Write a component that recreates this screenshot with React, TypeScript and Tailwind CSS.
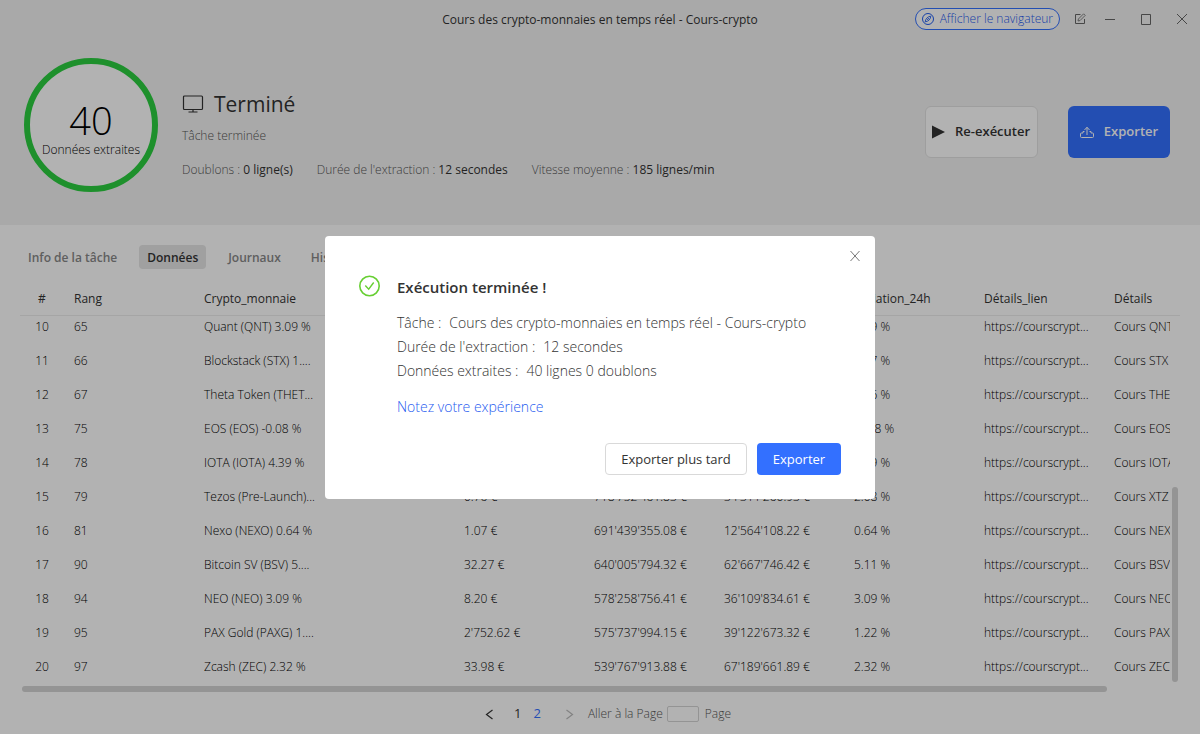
import { ReactNode, useState } from "react";
import clsx from "clsx";

const TITLE = "Cours des crypto-monnaies en temps réel - Cours-crypto";
const TABS = ["Info de la tâche", "Données", "Journaux", "Historique"];
const COLUMNS = [
  "Rang",
  "Crypto_monnaie",
  "",
  "Prix",
  "Capitalisation",
  "Volume_24h",
  "Variation_24h",
  "Détails_lien",
  "Détails",
];
const LINK = "https://courscrypt...";

interface Row {
  id: number;
  rank: string;
  name: string;
  price?: string;
  cap?: string;
  volume?: string;
  change: string;
  details: string;
}

const ROWS: Row[] = [
  { id: 10, rank: "65", name: "Quant (QNT) 3.09 %", change: "3.09 %", details: "Cours QNT" },
  { id: 11, rank: "66", name: "Blockstack (STX) 1....", change: "1.67 %", details: "Cours STX" },
  { id: 12, rank: "67", name: "Theta Token (THET...", change: "1.96 %", details: "Cours THETA" },
  { id: 13, rank: "75", name: "EOS (EOS) -0.08 %", change: "-0.08 %", details: "Cours EOS" },
  { id: 14, rank: "78", name: "IOTA (IOTA) 4.39 %", change: "4.39 %", details: "Cours IOTA" },
  {
    id: 15,
    rank: "79",
    name: "Tezos (Pre-Launch)...",
    price: "0.76 €",
    cap: "718'752'461.83 €",
    volume: "34'311'260.93 €",
    change: "2.08 %",
    details: "Cours XTZ",
  },
  {
    id: 16,
    rank: "81",
    name: "Nexo (NEXO) 0.64 %",
    price: "1.07 €",
    cap: "691'439'355.08 €",
    volume: "12'564'108.22 €",
    change: "0.64 %",
    details: "Cours NEXO",
  },
  {
    id: 17,
    rank: "90",
    name: "Bitcoin SV (BSV) 5....",
    price: "32.27 €",
    cap: "640'005'794.32 €",
    volume: "62'667'746.42 €",
    change: "5.11 %",
    details: "Cours BSV",
  },
  {
    id: 18,
    rank: "94",
    name: "NEO (NEO) 3.09 %",
    price: "8.20 €",
    cap: "578'258'756.41 €",
    volume: "36'109'834.61 €",
    change: "3.09 %",
    details: "Cours NEO",
  },
  {
    id: 19,
    rank: "95",
    name: "PAX Gold (PAXG) 1....",
    price: "2'752.62 €",
    cap: "575'737'994.15 €",
    volume: "39'122'673.32 €",
    change: "1.22 %",
    details: "Cours PAXG",
  },
  {
    id: 20,
    rank: "97",
    name: "Zcash (ZEC) 2.32 %",
    price: "33.98 €",
    cap: "539'767'913.88 €",
    volume: "67'189'661.89 €",
    change: "2.32 %",
    details: "Cours ZEC",
  },
];

export default function App() {
  const [open, setOpen] = useState(true);

  return (
    <div className="flex h-screen min-h-[600px] flex-col overflow-hidden bg-white font-['Open_Sans',sans-serif] text-xs font-light text-black">
      <header className="bg-[#f3f3f3]">
        <TitleBar />
        <Summary />
      </header>
      <main className="flex min-h-0 flex-auto flex-col px-5 pt-5">
        <Tabs />
        <DataTable />
        <Pagination />
      </main>
      {open ? <FinishedDialog onClose={() => setOpen(false)} /> : null}
    </div>
  );
}

function TitleBar() {
  return (
    <div className="grid h-[38px] grid-cols-[1fr_auto_1fr] items-center">
      <div />
      <h1 className="pt-0.5 font-medium text-[#333]">{TITLE}</h1>
      <div className="flex items-center justify-end pr-3">
        <button className="mr-3.5 flex h-[22px] items-center gap-1.5 whitespace-nowrap rounded-full border border-[#3370ff] bg-white px-1.5 text-[#1f5cf0]">
          <CompassIcon />
          Afficher le navigateur
        </button>
        <div className="flex items-center text-[#666]">
          <button aria-label="Modifier" className="mr-[18px]">
            <EditIcon />
          </button>
          <div className="flex gap-6">
            <button aria-label="Réduire">
              <WindowIcon d="M1 6.5h10" />
            </button>
            <button aria-label="Agrandir">
              <WindowIcon d="M1.5 1.5h9v10h-9z" />
            </button>
            <button aria-label="Fermer la fenêtre">
              <WindowIcon d="M1 1l10 10M11 1L1 11" />
            </button>
          </div>
        </div>
      </div>
    </div>
  );
}

function Summary() {
  return (
    <section className="flex items-start pb-[33px] pl-6 pr-[30px] pt-5">
      <div className="flex size-[134px] flex-none flex-col items-center justify-center rounded-full border-[6px] border-[#2bcf40] bg-white pt-2.5">
        <span className="text-[38px] leading-10">40</span>
        <span className="whitespace-nowrap leading-5">Données extraites</span>
      </div>
      <div className="ml-6 flex-auto pt-8">
        <h2 className="flex items-center gap-2.5 text-[21px] font-medium leading-7 text-[#333]">
          <MonitorIcon />
          Terminé
        </h2>
        <p className="mt-2 leading-5 text-[#555]">Tâche terminée</p>
        <div className="mt-3.5 flex gap-6 whitespace-nowrap leading-5">
          <Stat label="Doublons" value="0 ligne(s)" />
          <Stat label="Durée de l'extraction" value="12 secondes" />
          <Stat label="Vitesse moyenne" value="185 lignes/min" />
        </div>
      </div>
      <div className="flex flex-none gap-[30px] pt-12 text-[13px] font-semibold">
        <button className="flex h-[52px] w-[113px] items-center gap-2.5 whitespace-nowrap rounded-md border border-[#e2e2e2] bg-white pl-1.5 text-[#333]">
          <svg width="13" height="14" viewBox="0 0 13 14" className="flex-none">
            <path d="M0 0.5L13 7L0 13.5z" fill="currentColor" />
          </svg>
          Re-exécuter
        </button>
        <button className="flex h-[52px] w-[102px] items-center justify-center gap-2.5 rounded-md bg-[#3370ff] text-white">
          <ExportIcon />
          Exporter
        </button>
      </div>
    </section>
  );
}

function Stat({ label, value }: { label: string; value: string }) {
  return (
    <p className="text-[#555]">
      {label} : <span className="font-medium text-[#333]">{value}</span>
    </p>
  );
}

function Tabs() {
  const [active, setActive] = useState("Données");

  return (
    <nav className="flex gap-3.5">
      {TABS.map((tab) => (
        <button
          key={tab}
          onClick={() => setActive(tab)}
          className={clsx(
            "h-6 rounded px-2 pt-0.5 font-semibold",
            tab === active ? "bg-[#e5e5e5] text-[#333]" : "text-[#888]",
          )}
        >
          {tab}
        </button>
      ))}
    </nav>
  );
}

function ColumnWidths() {
  return (
    <colgroup>
      <col className="w-11" />
      {COLUMNS.map((_, i) => (
        <col key={i} className="w-[130px]" />
      ))}
    </colgroup>
  );
}

function DataTable() {
  return (
    <div className="mt-3.5 flex min-h-0 flex-auto flex-col">
      <div className="flex-none overflow-hidden border-b border-[#ececec]">
        <table className="w-[1214px] table-fixed text-[#333]">
          <ColumnWidths />
          <thead>
            <tr className="h-8 text-left">
              <th className="text-center font-medium">#</th>
              {COLUMNS.map((column, i) => (
                <th key={i} className="px-2.5 font-medium">
                  {column}
                </th>
              ))}
            </tr>
          </thead>
        </table>
      </div>
      <div className="flex min-h-0 flex-auto items-end gap-0.5">
        {/* scrolled to the last row, so the first one is cut by the header */}
        <div className="flex h-full min-w-0 flex-auto flex-col justify-end overflow-hidden">
          <table className="w-[1214px] flex-none table-fixed">
            <ColumnWidths />
            <tbody>
              {ROWS.map((row) => (
                <tr key={row.id} className="h-[34px] whitespace-nowrap">
                  <td className="text-center">{row.id}</td>
                  <Cell>{row.rank}</Cell>
                  <Cell>{row.name}</Cell>
                  <Cell />
                  <Cell>{row.price}</Cell>
                  <Cell>{row.cap}</Cell>
                  <Cell>{row.volume}</Cell>
                  <Cell>{row.change}</Cell>
                  <Cell>{LINK}</Cell>
                  <Cell>{row.details}</Cell>
                </tr>
              ))}
            </tbody>
          </table>
        </div>
        <div className="mb-0.5 mr-0.5 h-[195px] w-1.5 flex-none rounded-full bg-[#d4d4d4]" />
      </div>
      <div className="my-0.5 ml-0.5 mr-[73px] h-1.5 flex-none rounded-full bg-[#d4d4d4]" />
    </div>
  );
}

function Cell({ children }: { children?: ReactNode }) {
  return <td className="px-2.5">{children}</td>;
}

function Pagination() {
  return (
    <div className="flex h-10 flex-none items-center justify-center pl-4 text-[#555]">
      <button aria-label="Page précédente" className="text-[#333]">
        <Chevron d="M7.5 1L1.5 5.5L7.5 10" />
      </button>
      <button className="ml-5 text-[13px] font-normal text-[#333]">1</button>
      <button className="ml-3 text-[13px] font-normal text-[#3370ff]">2</button>
      <button aria-label="Page suivante" className="ml-6 text-[#bbb]">
        <Chevron d="M1.5 1L7.5 5.5L1.5 10" />
      </button>
      <label htmlFor="page" className="ml-3.5">
        Aller à la Page
      </label>
      <input id="page" className="ml-1 h-4 w-8 rounded-xs border border-[#d4d4d4] bg-white text-center" />
      <span className="ml-1.5">Page</span>
    </div>
  );
}

function FinishedDialog({ onClose }: { onClose: () => void }) {
  return (
    <div className="fixed inset-0 flex items-center justify-center bg-black/30">
      <div
        role="dialog"
        aria-labelledby="dialog-title"
        className="relative flex w-[550px] gap-4 rounded bg-white px-[34px] pb-6 pt-[39px] text-sm leading-6 text-[#333]"
      >
        <button aria-label="Fermer" onClick={onClose} className="absolute right-[15px] top-[15px] text-[#777]">
          <svg width="10" height="10" viewBox="0 0 10 10" fill="none" stroke="currentColor">
            <path d="M0.5 0L9.5 10M9.5 0L0.5 10" />
          </svg>
        </button>
        <CheckIcon />
        <div className="flex-auto">
          <h3 id="dialog-title" className="text-[15px] font-semibold leading-6">
            Exécution terminée !
          </h3>
          <dl className="mt-3">
            <Info label="Tâche" value={TITLE} />
            <Info label="Durée de l'extraction" value="12 secondes" />
            <Info label="Données extraites" value="40 lignes 0 doublons" />
          </dl>
          <a href="#" className="mt-3 inline-block text-[#1f5cf0]">
            Notez votre expérience
          </a>
          <div className="mt-6 flex justify-end gap-2.5 text-[13px]">
            <button onClick={onClose} className="h-8 w-[142px] rounded border border-[#d9d9d9] font-normal">
              Exporter plus tard
            </button>
            <button onClick={onClose} className="h-8 w-[84px] rounded bg-[#3370ff] font-medium text-white">
              Exporter
            </button>
          </div>
        </div>
      </div>
    </div>
  );
}

function Info({ label, value }: { label: string; value: string }) {
  return (
    <div className="flex gap-2 whitespace-nowrap">
      <dt>{label} :</dt>
      <dd>{value}</dd>
    </div>
  );
}

function WindowIcon({ d }: { d: string }) {
  return (
    <svg width="12" height="13" viewBox="0 0 12 13" fill="none" stroke="currentColor">
      <path d={d} />
    </svg>
  );
}

function Chevron({ d }: { d: string }) {
  return (
    <svg width="9" height="11" viewBox="0 0 9 11" fill="none" stroke="currentColor" strokeWidth="1.2">
      <path d={d} />
    </svg>
  );
}

function CompassIcon() {
  return (
    <svg width="12" height="12" viewBox="0 0 12 12" fill="none" stroke="currentColor" className="flex-none">
      <circle cx="6" cy="6" r="5.5" />
      <path d="M8.8 3.2C6 3.4 3.4 5.6 3.2 8.8C6.2 8.6 8.6 6.2 8.8 3.2z" strokeWidth="0.9" />
      <path d="M5.2 6.8L6.8 5.2" />
    </svg>
  );
}

function EditIcon() {
  return (
    <svg width="12" height="12" viewBox="0 0 12 12" fill="none" stroke="currentColor">
      <path d="M6.5 1.5H1.5V10.5H10.5V6" />
      <path d="M4 8L4.4 6L9.6 0.8L11.2 2.4L6 7.6z" strokeWidth="0.8" />
    </svg>
  );
}

function MonitorIcon() {
  return (
    <svg width="22" height="19" viewBox="0 0 22 19" fill="none" stroke="currentColor">
      <rect x="1.5" y="1" width="19" height="13.5" rx="1" strokeWidth="1.2" />
      <path d="M11 14.5V17M6.5 17H15.5" strokeWidth="1.2" />
    </svg>
  );
}

function ExportIcon() {
  return (
    <svg width="14" height="13" viewBox="0 0 14 13" fill="none" stroke="currentColor" strokeWidth="1">
      <path d="M4.5 5.5H3V7H1.5Q0.5 7 0.5 8V10.5Q0.5 11.5 1.5 11.5H12.5Q13.5 11.5 13.5 10.5V8Q13.5 7 12.5 7H11V5.5H9.5" />
      <path d="M7 9V1.5M4.5 4L7 1.2L9.5 4" />
    </svg>
  );
}

function CheckIcon() {
  return (
    <svg width="22" height="22" viewBox="0 0 22 22" fill="none" stroke="#67cf33" className="flex-none">
      <circle cx="10.5" cy="11" r="9.7" strokeWidth="1.6" />
      <path d="M6.3 10.5L9.7 14.2L14.7 7.5" strokeWidth="1.4" />
    </svg>
  );
}
